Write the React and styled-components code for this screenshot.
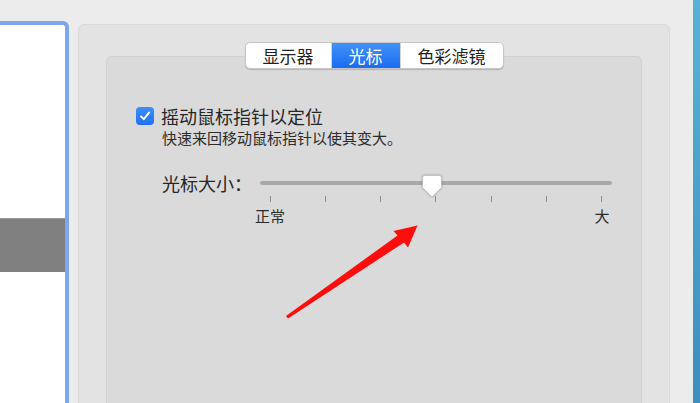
import React from 'react';
import styled, { createGlobalStyle } from 'styled-components';

const GlobalStyle = createGlobalStyle`
  html, body {
    margin: 0;
    padding: 0;
    background: #ececec;
    overflow: hidden;
  }
  body {
    font-family: "Noto Sans CJK SC", "Noto Sans", sans-serif;
    color: #262626;
  }
`;

const Screen = styled.div`
  position: relative;
  display: flex;
  width: 700px;
  height: 403px;
  overflow: hidden;
  background: #ececec;
`;

const Sidebar = styled.div`
  width: 65px;
  height: 420px;
  margin-top: 21px;
  background: #ffffff;
  border-top: 4px solid #7ca6ee;
  border-right: 4px solid #7ca6ee;
  border-top-right-radius: 6px;
  flex-shrink: 0;
`;

const SidebarBar = styled.div`
  margin-top: 193px;
  height: 53px;
  background: #808080;
  border-top: 1px solid #9c9c9c;
`;

const Pane = styled.div`
  display: flex;
  flex-direction: column;
  align-items: center;
  width: 590px;
  height: 420px;
  margin: 24px 0 0 9px;
  padding-top: 17px;
  background: #e3e3e3;
  border: 1px solid #d9d9d9;
  border-radius: 6px;
  flex-shrink: 0;
`;

const Segmented = styled.div`
  position: relative;
  z-index: 1;
  display: flex;
  height: 25px;
  margin-bottom: -13px;
  background: #ffffff;
  border: 1px solid #c6c6c6;
  border-radius: 5px;
  box-shadow: 0 1px 1px rgba(0, 0, 0, 0.18);
  overflow: hidden;
`;

const Segment = styled.div`
  display: flex;
  align-items: center;
  padding: 0 17px;
  font-size: 17px;
  line-height: 25px;
  color: ${(p) => (p.$active ? '#ffffff' : '#222222')};
  background: ${(p) =>
    p.$active ? 'linear-gradient(#4192f8, #1a6cf0)' : 'transparent'};
  border-left: ${(p) => (p.$first ? 'none' : '1px solid #d4d4d4')};
`;

const Box = styled.div`
  align-self: stretch;
  flex: 1;
  margin: 0 27px;
  padding: 48px 0 0 29px;
  background: #dadada;
  border: 1px solid #d1d1d1;
  border-radius: 5px;
`;

const CheckRow = styled.div`
  display: flex;
  align-items: center;
  gap: 7px;
  height: 22px;
  font-size: 18px;
  line-height: 22px;
`;

const CheckBox = styled.div`
  width: 18px;
  height: 18px;
  border-radius: 4px;
  background: linear-gradient(#3d8ef7, #236ff0);
  display: flex;
  align-items: center;
  justify-content: center;
`;

const Hint = styled.div`
  margin: 1px 0 0 26px;
  font-size: 15px;
  line-height: 20px;
  color: #2c2c2c;
`;

const SizeRow = styled.div`
  display: flex;
  align-items: flex-start;
  margin: 23px 0 0 26px;
`;

const SizeLabel = styled.div`
  width: 98px;
  font-size: 18px;
  line-height: 24px;
  flex-shrink: 0;
`;

const Slider = styled.div`
  width: 352px;
`;

const TrackArea = styled.div`
  position: relative;
  height: 24px;
  display: flex;
  align-items: center;
`;

const Track = styled.div`
  width: 100%;
  height: 4px;
  border-radius: 2px;
  background: #a8a8a8;
`;

const Thumb = styled.svg`
  position: absolute;
  left: 162px;
  top: 4px;
  filter: drop-shadow(0 0.5px 1px rgba(0, 0, 0, 0.3));
`;

const Ticks = styled.div`
  display: flex;
  justify-content: space-between;
  margin: 1px 10px 0 10px;
  height: 6px;
`;

const Tick = styled.div`
  width: 1px;
  background: #8a8a8a;
`;

const ScaleLabels = styled.div`
  display: flex;
  justify-content: space-between;
  margin: 5px -20px 0 -20px;
  font-size: 15px;
  line-height: 18px;
  color: #2c2c2c;
`;

const ScaleLabel = styled.div`
  width: 60px;
  text-align: center;
`;

const Strip = styled.div`
  width: 7px;
  margin-left: auto;
  background: linear-gradient(#58b2d6, #3a8fbb);
  flex-shrink: 0;
`;

const Arrow = styled.svg`
  position: absolute;
  left: 0;
  top: 0;
  pointer-events: none;
`;

export default function App() {
  const tabs = ['显示器', '光标', '色彩滤镜'];
  return (
    <>
      <GlobalStyle />
      <Screen>
        <Sidebar>
          <SidebarBar />
        </Sidebar>
        <Pane>
          <Segmented>
            {tabs.map((t, i) => (
              <Segment key={t} $first={i === 0} $active={i === 1}>
                {t}
              </Segment>
            ))}
          </Segmented>
          <Box>
            <CheckRow>
              <CheckBox>
                <svg width="12" height="12" viewBox="0 0 12 12">
                  <path
                    d="M2 6.4 L4.8 9.2 L10 2.6"
                    fill="none"
                    stroke="#fff"
                    strokeWidth="1.9"
                    strokeLinecap="round"
                    strokeLinejoin="round"
                  />
                </svg>
              </CheckBox>
              摇动鼠标指针以定位
            </CheckRow>
            <Hint>快速来回移动鼠标指针以使其变大。</Hint>
            <SizeRow>
              <SizeLabel>光标大小：</SizeLabel>
              <Slider>
                <TrackArea>
                  <Track />
                  <Thumb width="20" height="23" viewBox="0 0 20 23">
                    <path
                      d="M3 0.5 H17 Q19.5 0.5 19.5 3 V12.5 L10 22 L0.5 12.5 V3 Q0.5 0.5 3 0.5 Z"
                      fill="#ffffff"
                      stroke="#b9b9b9"
                      strokeWidth="0.6"
                    />
                  </Thumb>
                </TrackArea>
                <Ticks>
                  {Array.from({ length: 7 }).map((_, i) => (
                    <Tick key={i} />
                  ))}
                </Ticks>
                <ScaleLabels>
                  <ScaleLabel>正常</ScaleLabel>
                  <ScaleLabel>大</ScaleLabel>
                </ScaleLabels>
              </Slider>
            </SizeRow>
          </Box>
        </Pane>
        <Strip />
        <Arrow width="700" height="403" viewBox="0 0 700 403">
          <path
            d="M286 316 L397.5 235.5 L393.5 231 L417.5 225.5 L408 247.5 L404 242.5 L288 318.5 Z"
            fill="#ff0d0d"
          />
        </Arrow>
      </Screen>
    </>
  );
}
